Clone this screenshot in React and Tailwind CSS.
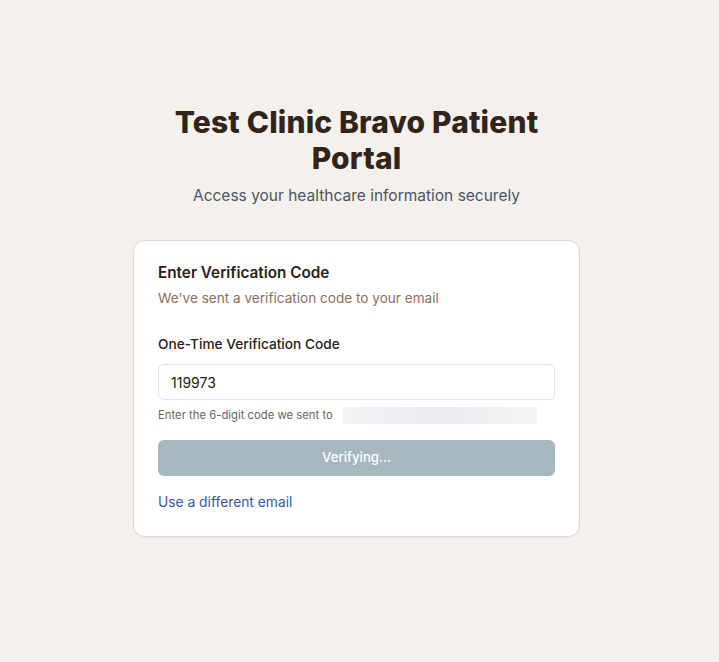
import React, { useState } from 'react';

const App = () => {
    const [code, setCode] = useState('119973');

    return (
        <div className="min-h-[662px] w-full bg-[#f4f1ec]">
            <div
                className="w-[713px] flex flex-col items-center pt-[104px]"
                style={{ fontFamily: 'Inter, "Liberation Sans", sans-serif' }}
            >
                {/* Header */}
                <h1 className="w-[400px] text-center text-[30px] leading-[36px] font-extrabold tracking-[0.005em] text-[#33241a]">
                    Test Clinic Bravo Patient Portal
                </h1>
                <p className="mt-[8px] text-[15.5px] leading-[24px] text-[#4b5563]">
                    Access your healthcare information securely
                </p>

                {/* Card */}
                <div className="mt-[32px] w-[447px] bg-white border border-[#dcd9d4] rounded-[12px] shadow-[0_1px_2px_rgba(0,0,0,0.04)] px-6 pt-[20px] pb-[24px]">
                    <h2 className="text-[15.3px] leading-[24px] font-semibold text-[#2a211b]">
                        Enter Verification Code
                    </h2>
                    <p className="mt-[3px] text-[13.6px] leading-[20px] text-[#8a705e]">
                        We've sent a verification code to your email
                    </p>

                    <label className="block mt-[26px] text-[13.7px] leading-[20px] font-medium text-[#2a211b]">
                        One-Time Verification Code
                    </label>
                    <input
                        type="text"
                        value={code}
                        onChange={(e) => setCode(e.target.value)}
                        className="mt-[10px] w-full h-[36px] px-3 border border-[#e5e3e0] rounded-[6px] text-[14px] text-[#1f1a17] focus:outline-none"
                    />
                    <div className="mt-[6px] flex items-center h-[18px]">
                        <span className="text-[11.3px] leading-[16px] text-[#6b6560]">
                            Enter the 6-digit code we sent to
                        </span>
                        {/* blurred email */}
                        <span className="ml-[10px] w-[194px] h-[17px] bg-gradient-to-r from-[#f1f2f4] via-[#e9ebee] to-[#f3f4f5]" />
                    </div>

                    <button
                        disabled
                        className="mt-[16px] w-full h-[36px] rounded-[6px] bg-[#a6b7be] text-white text-[13.2px] font-medium"
                    >
                        Verifying...
                    </button>

                    <a href="#" className="block mt-[16px] text-[13.8px] leading-[20px] text-[#3559a8]">
                        Use a different email
                    </a>
                </div>
            </div>
        </div>
    );
};

export default App;
